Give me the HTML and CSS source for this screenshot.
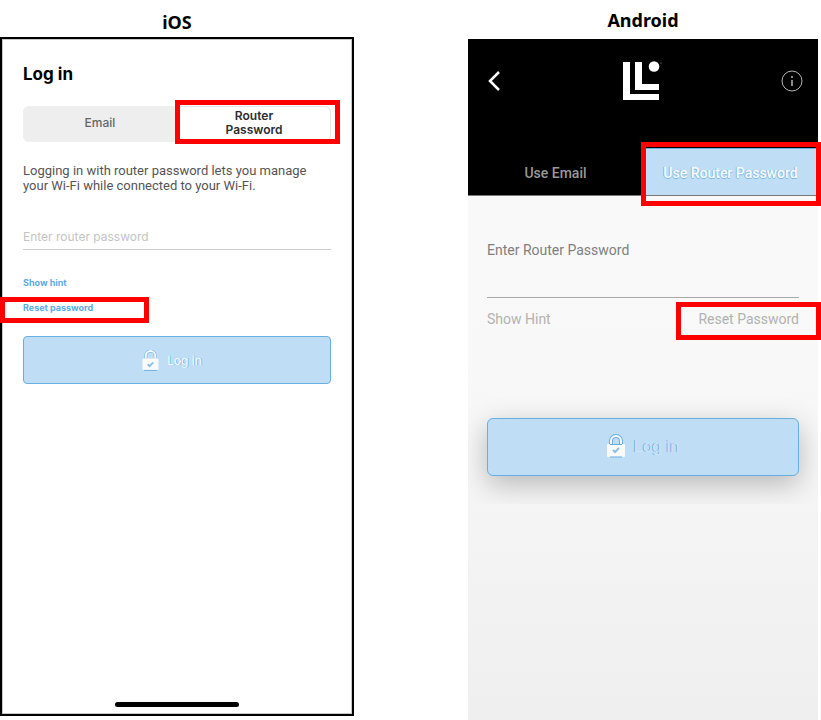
FILE: index.html
```html
<!DOCTYPE html>
<html lang="en">
<head>
    <meta charset="UTF-8">
    <meta name="viewport" content="width=device-width, initial-scale=1.0">
    <title>Log in with router password</title>
    <link rel="stylesheet" href="styles.css">
</head>
<body>
    <div class="compare">
        <section class="column ios">
            <h2 class="caption">iOS</h2>
            <div class="phone">
                <h1 class="title">Log in</h1>
                <form>
                    <div class="segments">
                        <button type="button" class="segment">Email</button>
                        <div class="mark mark-segment">
                            <button type="button" class="segment active">Router<br>Password</button>
                        </div>
                    </div>
                    <p class="intro">Logging in with router password lets you manage your Wi-Fi while connected to your Wi-Fi.</p>
                    <input type="password" class="field" placeholder="Enter router password" aria-label="Router password">
                    <div class="links">
                        <a href="#" class="link">Show hint</a>
                        <div class="mark mark-reset"><a href="#" class="link">Reset password</a></div>
                    </div>
                    <button type="submit" class="login">
                        <svg class="lock" viewBox="0 0 18 22" aria-hidden="true">
                            <path d="M4 9V6a5 5 0 0 1 10 0v3" fill="none" stroke="#68afe1" stroke-width="3"/>
                            <path d="M4 9V6a5 5 0 0 1 10 0v3" fill="none" stroke="#fafafa" stroke-width="2"/>
                            <rect x="0.500" y="9" width="17" height="12" rx="1" fill="#fafafa"/>
                            <path d="M2 21.500h14" stroke="#68afe1" stroke-width="1"/>
                            <path d="M6 15l2 2 4-4" fill="none" stroke="#8cc2e9" stroke-width="2"/>
                        </svg>
                        <span>Log in</span>
                    </button>
                </form>
                <div class="home-bar"></div>
            </div>
        </section>

        <section class="column android">
            <h2 class="caption">Android</h2>
            <div class="phone">
                <header class="top">
                    <div class="bar">
                        <button type="button" class="icon-btn" aria-label="Back">
                            <svg width="14" height="22" viewBox="0 0 14 22">
                                <path d="M12 2L3 11l9 9" fill="none" stroke="#fff" stroke-width="2.500"/>
                            </svg>
                        </button>
                        <svg class="logo" width="40" height="40" viewBox="0 0 40 40" aria-hidden="true">
                            <path d="M0 1h7v32h29v6H0z M12 1h7v22h17v6H12z" fill="#fff"/>
                            <circle cx="31" cy="5.500" r="5.300" fill="#fff"/>
                            <circle cx="38" cy="2" r="0.600" fill="#999"/>
                        </svg>
                        <button type="button" class="icon-btn" aria-label="Info">
                            <svg width="22" height="22" viewBox="0 0 22 22">
                                <circle cx="11" cy="11" r="10" fill="none" stroke="#b5b5b5" stroke-width="1"/>
                                <path d="M11 10v6M11 6v2" stroke="#b5b5b5" stroke-width="1.500"/>
                            </svg>
                        </button>
                    </div>
                    <div class="tabs">
                        <button type="button" class="tab">Use Email</button>
                        <div class="mark mark-tab">
                            <button type="button" class="tab active">Use Router Password</button>
                        </div>
                    </div>
                </header>
                <form class="body">
                    <label for="routerPassword" class="label">Enter Router Password</label>
                    <input type="password" id="routerPassword" class="field">
                    <div class="links">
                        <a href="#" class="link">Show Hint</a>
                        <div class="mark mark-reset"><a href="#" class="link">Reset Password</a></div>
                    </div>
                    <div class="login-wrap">
                        <button type="submit" class="login">
                            <svg class="lock" viewBox="0 0 18 24" aria-hidden="true">
                                <path d="M4 10V7a5 5 0 0 1 10 0v3" fill="none" stroke="#68afe1" stroke-width="4"/>
                                <path d="M4 10V7a5 5 0 0 1 10 0v3" fill="none" stroke="#fafafa" stroke-width="2"/>
                                <rect x="0" y="10" width="18" height="13" rx="1" fill="#fafafa"/>
                                <path d="M3 10.500h12M3 23h12" stroke="#68afe1" stroke-width="1"/>
                                <path d="M6 16l2 2 4-4" fill="none" stroke="#8cc2e9" stroke-width="2"/>
                            </svg>
                            <span>Log in</span>
                        </button>
                    </div>
                </form>
            </div>
        </section>
    </div>
</body>
</html>
```
FILE: styles.css
```css
* {
    box-sizing: border-box;
}
body {
    margin: 0;
    font-family: Inter, "Liberation Sans", sans-serif;
    background-color: #fff;
}
button {
    margin: 0;
    padding: 0;
    border: none;
    background: none;
    font-family: inherit;
    cursor: pointer;
}
a {
    text-decoration: none;
}
.compare {
    display: grid;
    grid-template-columns: 354fr 350fr;
    gap: 114px;
    min-height: 100vh;
    padding-right: 3px;
}
.column {
    display: flex;
    flex-direction: column;
}
.caption {
    margin: 0;
    font-family: "Noto Sans", sans-serif;
    font-size: 18px;
    line-height: 24px;
    font-weight: 700;
    text-align: center;
    color: #000;
}
.phone {
    display: flex;
    flex-direction: column;
    flex: 1;
}

/* red callout frames */
.mark {
    position: relative;
}
.mark::after {
    content: "";
    position: absolute;
    border: 5px solid #f00;
    pointer-events: none;
}
.mark-segment::after {
    inset: -6px -9px -2px -2px;
}
.mark-tab::after {
    inset: -6px -3px -11px -2px;
}

/* login buttons */
.login {
    display: flex;
    align-items: center;
    justify-content: center;
    width: 100%;
    border: 1px solid #68afe1;
    background-color: #bfddf5;
}

/* iOS */
.ios {
    padding: 10px 0 4px;
}
.ios .phone {
    margin-top: 3px;
    padding: 24px 21px 7px;
    border: 2px solid #000;
    box-shadow: inset 0 0 0 1px #c8c8c8;
}
.title {
    margin: 0 0 21px;
    font-size: 17px;
    line-height: 22px;
    font-weight: 700;
    color: #000;
}
.segments {
    display: grid;
    grid-template-columns: 1fr 1fr;
    height: 36px;
    border-radius: 6px;
    background-color: #eee;
}
.segment {
    width: 100%;
    height: 36px;
    padding-bottom: 2px;
    font-size: 12px;
    line-height: 14px;
    font-weight: 500;
    color: #666;
}
.segment.active {
    border: 1px solid #e6e6e6;
    border-radius: 6px;
    background-color: #fff;
    font-weight: 600;
    color: #2b2d33;
}
.intro {
    margin: 21px 0 0;
    font-family: Roboto, sans-serif;
    font-size: 13px;
    line-height: 15px;
    color: #555;
}
.ios .field {
    display: block;
    width: 100%;
    height: 26px;
    margin-top: 31px;
    padding: 0;
    border: none;
    border-bottom: 1px solid #ccc;
    font-family: inherit;
    font-size: 12px;
    background: none;
}
.ios .field::placeholder {
    color: #c4c4c4;
}
.ios .links {
    display: flex;
    flex-direction: column;
    gap: 13px;
    margin-top: 27px;
}
.ios .link {
    display: block;
    width: fit-content;
    font-size: 9px;
    line-height: 12px;
    font-weight: 700;
    color: #5aabe3;
}
.ios .mark-reset {
    width: 100px;
}
.ios .mark-reset::after {
    inset: -5px -26px -9px -23px;
}
.ios .login {
    gap: 8px;
    height: 48px;
    margin-top: 22px;
    padding-right: 10px;
    border-radius: 4px;
    font-size: 12px;
    color: #f4f9fd;
    text-shadow: 1px 0 0 #7dbae7;
}
.ios .lock {
    width: 17px;
    height: 21px;
}
.home-bar {
    align-self: center;
    width: 124px;
    height: 5px;
    margin-top: auto;
    border-radius: 3px;
    background-color: #000;
}

/* Android */
.android {
    padding-top: 8px;
}
.android .phone {
    margin-top: 7px;
    font-family: Roboto, sans-serif;
    background: linear-gradient(#fafafa, #f8f8f8 50%, #efefef);
}
.top {
    border-bottom: 1px solid #777;
    background-color: #000;
}
.bar {
    display: grid;
    grid-template-columns: 1fr auto 1fr;
    align-items: center;
    height: 83px;
    padding: 0 15px 0 19px;
}
.logo {
    margin-right: 4px;
}
.icon-btn {
    display: flex;
}
.icon-btn:last-child {
    justify-self: end;
}
.tabs {
    display: grid;
    grid-template-columns: 1fr 1fr;
    margin-top: 26px;
}
.tab {
    width: 100%;
    height: 47px;
    padding-top: 2px;
    font-size: 14px;
    font-weight: 500;
    color: #999;
}
.tab.active {
    border-top: 1px solid #68afe1;
    background-color: #bfddf5;
    color: #fafafa;
    text-shadow: 0 1px 0 #7dbae7, -1px 0 0 #7dbae7;
}
.body {
    padding: 44px 0 0;
}
.label {
    display: block;
    margin: 0 19px;
    font-size: 14px;
    line-height: 20px;
    color: #808080;
}
.android .field {
    display: block;
    width: calc(100% - 38px);
    height: 38px;
    margin: 0 19px;
    padding: 0;
    border: none;
    border-bottom: 1px solid #aaa;
    background: none;
}
.android .links {
    display: flex;
    justify-content: space-between;
    margin: 11px 19px 0;
}
.android .link {
    display: block;
    font-size: 14px;
    line-height: 20px;
    color: #b2b2b2;
}
.android .mark-reset::after {
    inset: -7px -22px -11px -22px;
}
/* the shadow is cut off at the edges of this box */
.login-wrap {
    margin-top: 60px;
    padding: 29px 19px 28px;
    overflow: hidden;
}
.android .login {
    gap: 9px;
    height: 58px;
    padding-bottom: 2px;
    border-radius: 6px;
    box-shadow: 0 8px 28px rgba(0, 0, 0, 0.26);
    font-family: Inter, sans-serif;
    font-size: 16px;
    font-weight: 300;
    color: #cfe5f7;
    text-shadow: -1px 0 0 #68afe1;
}
.android .lock {
    width: 18px;
    height: 24px;
}
```
